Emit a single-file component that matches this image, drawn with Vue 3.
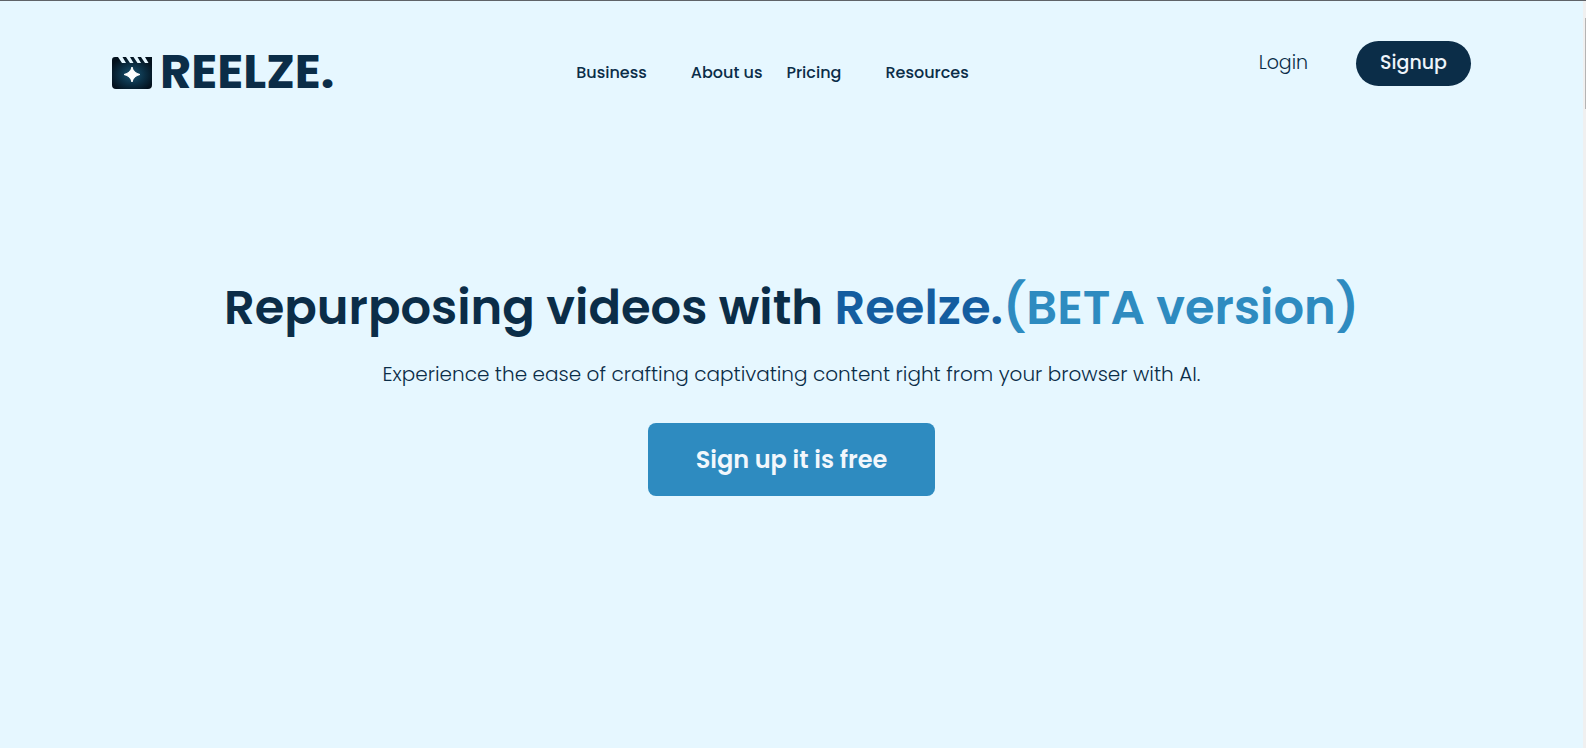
<script setup>
const links = [
  { label: 'Business', wide: true },
  { label: 'About us', wide: false },
  { label: 'Pricing', wide: true },
  { label: 'Resources', wide: false },
]
</script>

<template>
  <div class="page">
    <div class="content">
      <header class="header">
        <a class="brand" href="#">
          <svg class="mark" viewBox="0 0 40 33" aria-hidden="true">
            <defs>
              <radialGradient id="glow" cx="50%" cy="55%" r="58%">
                <stop offset="0" stop-color="#1c5674" />
                <stop offset="0.5" stop-color="#0c3248" />
                <stop offset="1" stop-color="#03111d" />
              </radialGradient>
            </defs>
            <path
              d="M3 1 L6 1 L10 7 L14 7 L10.5 1 L14 1 L18 7 L21.5 7 L18 1 L21.5 1 L25.5 7 L29 7 L25.5 1 L29 1 L33 7 L36.5 7 L33 1 L40 1 L40 29 Q40 33 36 33 L4 33 Q0 33 0 29 L0 4 Q0 1 3 1 Z"
              fill="url(#glow)"
            />
            <path
              d="M20 11 Q21.5 17 28 18.5 Q21.5 20 20 26 Q18.5 20 12 18.5 Q18.5 17 20 11 Z"
              fill="#fff"
              stroke="#fff"
              stroke-width="1"
              stroke-linejoin="round"
            />
          </svg>
          <span class="name">REELZE.</span>
        </a>
        <nav class="nav" aria-label="Main">
          <a
            v-for="link in links"
            :key="link.label"
            href="#"
            :class="['link', { wide: link.wide }]"
          >{{ link.label }}</a>
        </nav>
        <div class="account">
          <a class="login" href="#">Login</a>
          <button class="signup" type="button">Signup</button>
        </div>
      </header>
      <main class="hero">
        <h1 class="title">Repurposing videos with <span class="product">Reelze.</span><span class="beta">(BETA version)</span></h1>
        <p class="lead">Experience the ease of crafting captivating content right from your browser with AI.</p>
        <button class="cta" type="button">Sign up it is free</button>
      </main>
    </div>
    <div class="track" aria-hidden="true"><div class="thumb"></div></div>
  </div>
</template>

<style>
body {
  background: #e6f7ff;
}
</style>

<style scoped>
.page {
  display: flex;
  min-height: 100vh;
  box-sizing: border-box;
  border-top: 1px solid #5f6368;
  background: #e6f7ff;
  color: #0b2d48;
  font-family: Poppins, Inter, "Open Sans", sans-serif;
}
.content {
  flex: 1;
  min-width: 0;
}
.header {
  display: flex;
  justify-content: space-between;
  align-items: flex-start;
  padding: 40px 112px 0;
}
.brand {
  display: flex;
  align-items: center;
  gap: 8px;
  height: 62px;
  color: inherit;
  text-decoration: none;
}
.mark {
  width: 40px;
  height: 33px;
}
.name {
  font-size: 48px;
  font-weight: 700;
  line-height: 64px;
}
.nav {
  display: flex;
  gap: 24px;
  padding-right: 48px;
}
.link {
  font-size: 16px;
  font-weight: 500;
  line-height: 64px;
  color: inherit;
  text-decoration: none;
  white-space: nowrap;
}
.wide {
  padding-right: 20px;
}
.account {
  display: flex;
  align-items: flex-start;
  gap: 48px;
}
.login {
  font-size: 19px;
  font-weight: 300;
  line-height: 43px;
  color: inherit;
  text-decoration: none;
}
.signup {
  height: 45px;
  padding: 0 24px 2px;
  border: 0;
  border-radius: 24px;
  background: #0b2d48;
  color: #eef4fa;
  font-family: inherit;
  font-size: 19px;
  font-weight: 500;
}
.hero {
  display: flex;
  flex-direction: column;
  align-items: center;
  padding-top: 167px;
  text-align: center;
}
.title {
  margin: 0;
  font-size: 48px;
  font-weight: 600;
  line-height: 72px;
}
.product {
  color: #145da0;
}
.beta {
  color: #2e8bc0;
}
.lead {
  margin: 16px 0 0;
  font-size: 20px;
  font-weight: 300;
  line-height: 28px;
}
.cta {
  height: 73px;
  margin-top: 35px;
  padding: 0 48px;
  border: 0;
  border-radius: 8px;
  background: #2e8bc0;
  color: #f2f7fc;
  font-family: inherit;
  font-size: 24px;
  font-weight: 600;
}
.track {
  width: 3px;
  padding-top: 17px;
  box-sizing: border-box;
  background: #f0f0f0;
}
.thumb {
  height: 91px;
  margin-left: 2px;
  background: #b4b4b4;
}
</style>
